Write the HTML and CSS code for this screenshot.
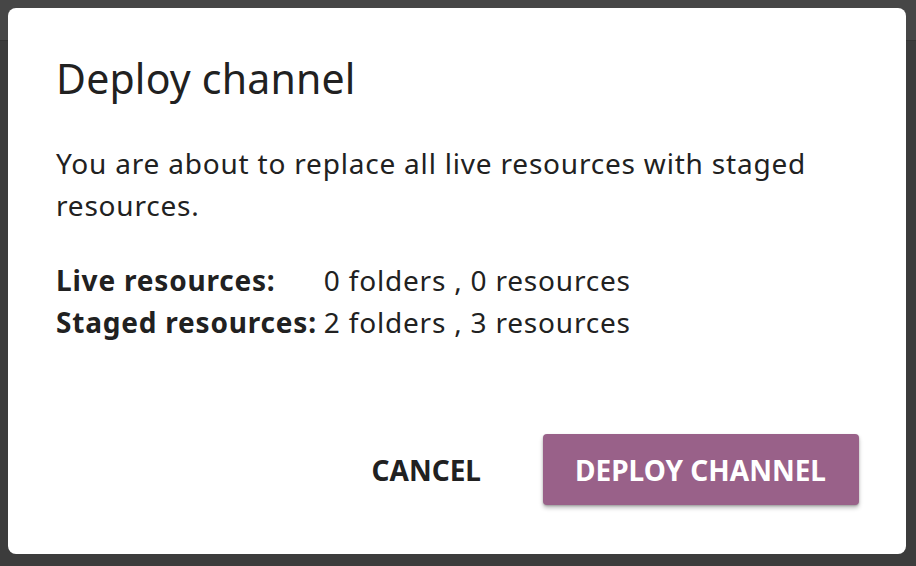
FILE: index.html
```html
<!DOCTYPE html>
<html lang="en">
<head>
<meta charset="utf-8">
<title>Deploy channel</title>
<link rel="stylesheet" href="styles.css">
</head>
<body>
<div class="app">
  <div class="app-header"></div>
  <div class="app-body"></div>
</div>
<div class="backdrop">
  <div class="dialog" role="dialog" aria-labelledby="dlg-title">
    <h1 class="dialog-title" id="dlg-title">Deploy channel</h1>
    <p class="dialog-text">You are about to replace all live resources with staged resources.</p>
    <div class="stats">
      <div class="stat-label">Live resources:</div>
      <div class="stat-value">0 folders , 0 resources</div>
      <div class="stat-label">Staged resources:</div>
      <div class="stat-value">2 folders , 3 resources</div>
    </div>
    <div class="actions">
      <button class="btn btn-flat" type="button">Cancel</button>
      <button class="btn btn-raised" type="button">Deploy channel</button>
    </div>
  </div>
</div>
</body>
</html>
```
FILE: styles.css
```css
html, body {
  margin: 0;
  padding: 0;
  height: 100%;
}
body {
  font-family: "Noto Sans", "Open Sans", sans-serif;
  color: #212121;
  background: #3c3c3c;
  overflow: hidden;
}
.app {
  height: 100%;
  display: flex;
  flex-direction: column;
}
.app-header {
  height: 40px;
  background: #464646;
  border-bottom: 1px solid #353535;
}
.app-body {
  flex: 1;
  background: #3c3c3c;
}
.backdrop {
  position: fixed;
  inset: 0;
  display: flex;
  align-items: flex-start;
  justify-content: flex-start;
  padding: 8px 10px 12px 8px;
}
.dialog {
  flex: 1;
  height: 546px;
  box-sizing: border-box;
  background: #fff;
  border-radius: 8px;
  padding: 48px 47px 0 48px;
  display: flex;
  flex-direction: column;
}
.dialog-title {
  margin: 0;
  font-size: 41px;
  font-weight: 400;
  line-height: 44px;
  letter-spacing: 0.2px;
  color: #212121;
}
.dialog-text {
  margin: 42px 0 0;
  font-size: 28px;
  line-height: 42px;
  letter-spacing: 0.8px;
  color: #212121;
}
.stats {
  margin-top: 33px;
  display: grid;
  grid-template-columns: max-content max-content;
  column-gap: 7px;
  font-size: 28px;
  line-height: 42px;
  letter-spacing: 0.8px;
}
.stat-label {
  font-weight: 700;
}
.actions {
  margin-top: auto;
  margin-bottom: 49px;
  display: flex;
  justify-content: flex-end;
  align-items: center;
  gap: 30px;
}
.btn {
  font-family: inherit;
  font-size: 28px;
  font-weight: 700;
  text-transform: uppercase;
  border: 0;
  border-radius: 4px;
  height: 71px;
  padding: 0 33px;
  cursor: pointer;
  letter-spacing: 0;
}
.btn-flat {
  background: transparent;
  color: #212121;
  padding: 0 32px;
}
.btn-raised {
  background: #996189;
  color: #fff;
  padding: 0 33px 0 32px;
  box-shadow: 0 3px 4px rgba(0,0,0,0.25), 0 1px 2px rgba(0,0,0,0.2);
}
```
